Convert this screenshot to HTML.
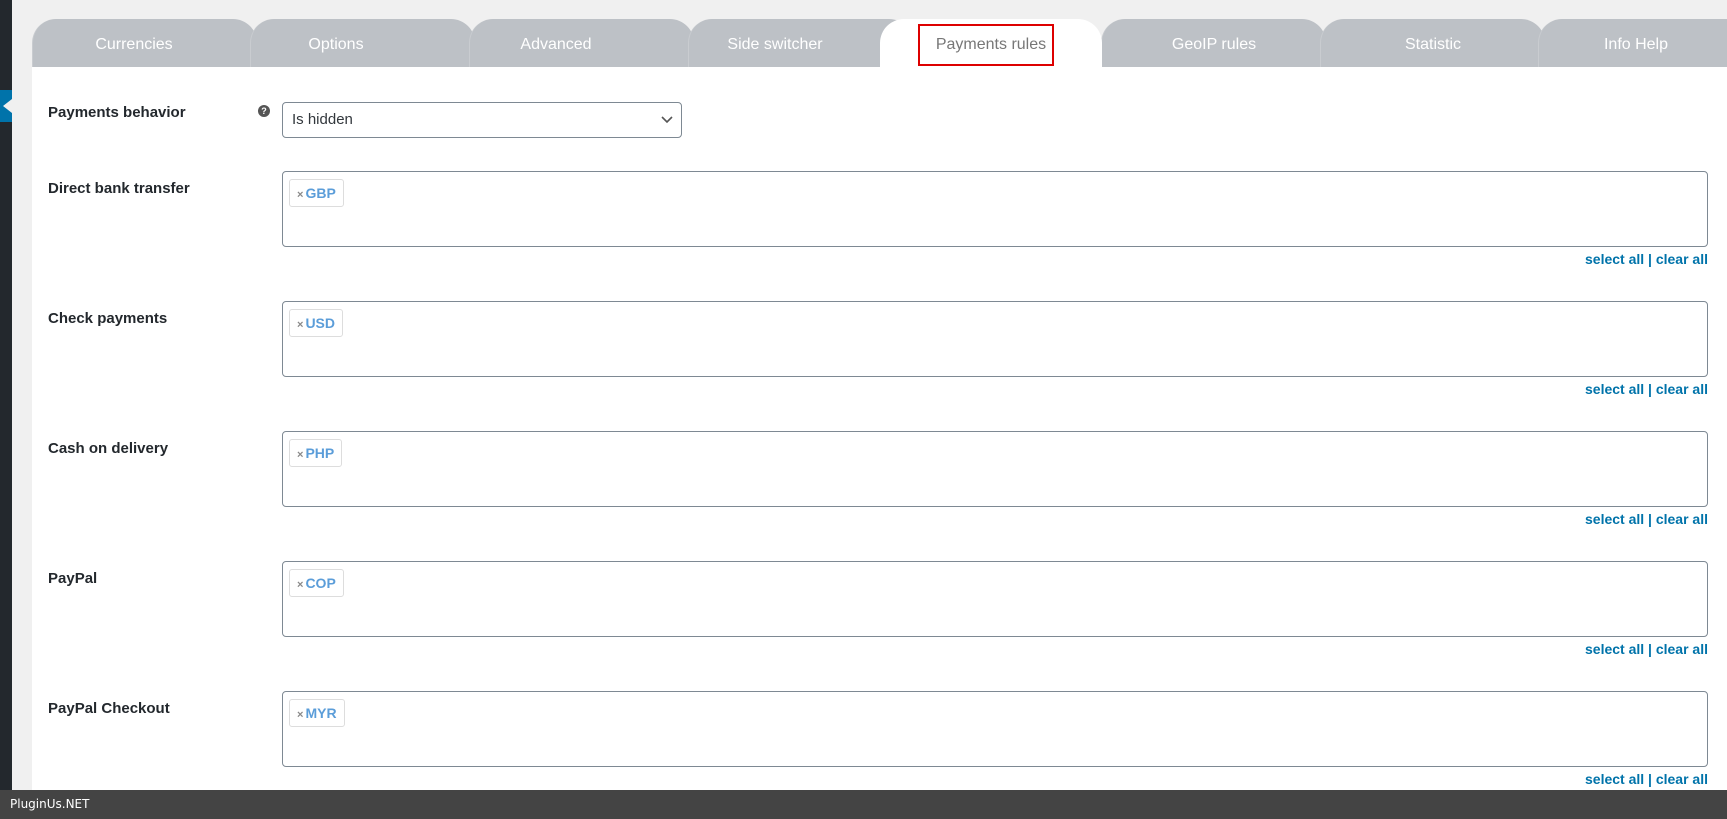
<!DOCTYPE html>
<html><head><style>
*{box-sizing:border-box;margin:0;padding:0}
body{width:1727px;height:819px;overflow:hidden;background:#f0f0f0;font-family:"Liberation Sans",Arial,sans-serif;position:relative}
.side{position:absolute;left:0;top:0;width:12px;height:790px;background:#23282d}
.side .hl{position:absolute;left:0;top:90px;width:12px;height:32px;background:#0073aa}
.side .hl:after{content:"";position:absolute;left:3px;top:9px;border-right:9px solid #f0f0f0;border-top:7px solid transparent;border-bottom:7px solid transparent}
.main{position:absolute;left:32px;top:67px;width:1695px;height:723px;background:#fff}
.tab{position:absolute;top:19px;height:48px;width:225px;background:#bdc1c6;border-radius:24px 24px 0 0;color:#fff;font-size:16px;text-align:center;line-height:52px;border-left:1px solid #c9ccd0}
.tab.act{background:#fff;color:#777;z-index:2}
.red{position:absolute;left:918px;top:24px;width:136px;height:42px;border:2px solid #d00;z-index:3}
.lbl{position:absolute;left:48px;font-size:15px;font-weight:bold;color:#23282d}
.box{position:absolute;left:282px;width:1426px;height:76px;border:1px solid #7e8993;border-radius:4px;background:#fff}
.tag{position:absolute;left:6px;top:7px;height:28px;border:1px solid #ddd;border-radius:3px;padding:0 7px;line-height:26px;font-size:14px;font-weight:bold;color:#5b9dd9}
.tag span{color:#888;font-size:11px;margin-right:2px}
.sa{position:absolute;right:19px;font-size:14px;font-weight:bold;color:#0073aa}
.foot{position:absolute;left:0;top:790px;width:1727px;height:29px;background:#444;color:#fff;font-family:"DejaVu Sans",sans-serif;font-size:12px;line-height:29px;padding-left:10px}
</style></head><body>
<div class="side"><div class="hl"></div></div>
<div class="main"></div>
<div class="tab" style="left:32px;padding-right:22px">Currencies</div>
<div class="tab" style="left:250px;padding-right:54px">Options</div>
<div class="tab" style="left:469px;padding-right:52px">Advanced</div>
<div class="tab" style="left:688px;padding-right:52px">Side switcher</div>
<div class="tab" style="left:1101px">GeoIP rules</div>
<div class="tab" style="left:1320px">Statistic</div>
<div class="tab" style="left:1538px;padding-right:30px">Info Help</div>
<div class="tab act" style="left:880px;width:222px;border:none">Payments rules</div>
<div class="red"></div>

<div class="lbl" style="top:104px">Payments behavior</div>
<div style="position:absolute;left:258px;top:105px;width:12px;height:12px;border-radius:50%;background:#555;color:#fff;font-size:9px;font-weight:bold;text-align:center;line-height:12px">?</div>
<div style="position:absolute;left:282px;top:102px;width:400px;height:36px;border:1px solid #7e8993;border-radius:4px;font-size:15px;line-height:34px;padding-left:9px;color:#32373c">Is hidden
<svg style="position:absolute;right:8px;top:13px" width="12" height="8" viewBox="0 0 12 8"><path d="M1 1l5 5 5-5" fill="none" stroke="#555" stroke-width="1.6"/></svg></div>

<div class="lbl" style="top:180px">Direct bank transfer</div>
<div class="box" style="top:171px"><div class="tag"><span>×</span>GBP</div></div>
<div class="sa" style="top:251px">select all | clear all</div>

<div class="lbl" style="top:310px">Check payments</div>
<div class="box" style="top:301px"><div class="tag"><span>×</span>USD</div></div>
<div class="sa" style="top:381px">select all | clear all</div>

<div class="lbl" style="top:440px">Cash on delivery</div>
<div class="box" style="top:431px"><div class="tag"><span>×</span>PHP</div></div>
<div class="sa" style="top:511px">select all | clear all</div>

<div class="lbl" style="top:570px">PayPal</div>
<div class="box" style="top:561px"><div class="tag"><span>×</span>COP</div></div>
<div class="sa" style="top:641px">select all | clear all</div>

<div class="lbl" style="top:700px">PayPal Checkout</div>
<div class="box" style="top:691px"><div class="tag"><span>×</span>MYR</div></div>
<div class="sa" style="top:771px">select all | clear all</div>

<div class="foot">PluginUs.NET</div>
</body></html>
